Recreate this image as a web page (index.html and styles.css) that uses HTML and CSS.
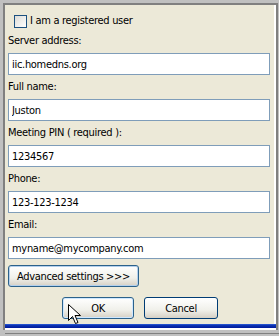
FILE: index.html
```html
<!DOCTYPE html>
<html lang="en">

<head>
    <meta charset="UTF-8" />
    <title>Connect</title>
    <link rel="stylesheet" href="styles.css">
</head>

<body>
    <div class="screen">
        <div class="window">
            <div class="dialog">
                <label class="check"><span class="box"></span>I am a registered user</label>

                <div class="label first">Server address:</div>
                <input class="field" type="text" value="iic.homedns.org">

                <div class="label">Full name:</div>
                <input class="field" type="text" value="Juston">

                <div class="label">Meeting PIN ( required ):</div>
                <input class="field" type="text" value="1234567">

                <div class="label">Phone:</div>
                <input class="field" type="text" value="123-123-1234">

                <div class="label">Email:</div>
                <input class="field" type="text" value="myname@mycompany.com">

                <button class="btn adv">Advanced settings &gt;&gt;&gt;</button>

                <div class="actions">
                    <button class="btn ok">OK</button>
                    <button class="btn cancel">Cancel</button>
                </div>
            </div>
            <div class="bar"></div>
        </div>
        <div class="ground"></div>

        <svg class="cursor" width="13" height="21" viewBox="0 0 13 21">
            <path d="M0.5 0.5 V16.5 L4.5 12.5 L7.5 19.5 L10 18.5 L7 11.5 H12.5 Z" fill="#fff" stroke="#000" stroke-width="1" stroke-linejoin="miter" />
        </svg>
    </div>
</body>

</html>
```

FILE: styles.css
```css
html,
body {
    margin: 0;
    background: #c0c0c0;
}

body {
    font-family: "DejaVu Sans", sans-serif;
    font-stretch: semi-condensed;
    font-size: 11px;
    letter-spacing: -0.3px;
    color: #000;
}

.screen {
    position: relative;
    width: 279px;
    height: 336px;
    overflow: hidden;
    padding: 3px 0 0 3px;
    box-sizing: border-box;
}

.window {
    width: 271px;
    border-top: 2px solid #808080;
    border-left: 2px solid #808080;
    border-right: 2px solid #808080;
    background: #fff;
    padding-bottom: 2px;
}

.dialog {
    background: #ece9d8;
    margin-right: 2px;
    padding: 9px 0 5px 3px;
    display: flex;
    flex-direction: column;
    align-items: flex-start;
}

.check {
    display: flex;
    align-items: center;
    height: 14px;
    padding-left: 6px;
    gap: 3px;
    line-height: 14px;
}

.check .box {
    width: 11px;
    height: 11px;
    border: 1px solid #1c5180;
    background: linear-gradient(135deg, #dcdcd7, #fff);
}

.label {
    line-height: 14px;
    padding: 5px 0;
}

.label.first {
    padding-top: 6px;
}

.field {
    width: 262px;
    height: 22px;
    box-sizing: border-box;
    margin: 0;
    border: 1px solid #7f9db9;
    background: #fff;
    padding: 0 3px;
    font: inherit;
    font-stretch: inherit;
    letter-spacing: inherit;
    color: #000;
    outline: none;
}

.btn {
    height: 22px;
    box-sizing: border-box;
    border: 1px solid #003c74;
    border-radius: 3px;
    background: linear-gradient(#fff, #f0f0ea 60%, #d6d0c5);
    font: inherit;
    font-stretch: inherit;
    letter-spacing: inherit;
    color: #000;
    padding: 0;
}

.adv {
    width: 131px;
    margin-top: 6px;
    border-color: #2c628b;
    box-shadow: inset 0 0 0 1px #b4d0ed;
}

.actions {
    display: flex;
    gap: 10px;
    margin: 10px 0 0 54px;
}

.ok {
    width: 72px;
    border-color: #2c628b;
    box-shadow: inset 0 0 0 1px #cee7ff;
}

.cancel {
    width: 74px;
}

.bar {
    height: 4px;
    background: linear-gradient(#2f5fd8, #0a2fb0 40%, #001a9a);
}

.ground {
    height: 1px;
    margin: 3px 0 0 2px;
    background: #808080;
}

.cursor {
    position: absolute;
    left: 68px;
    top: 304px;
}
```
